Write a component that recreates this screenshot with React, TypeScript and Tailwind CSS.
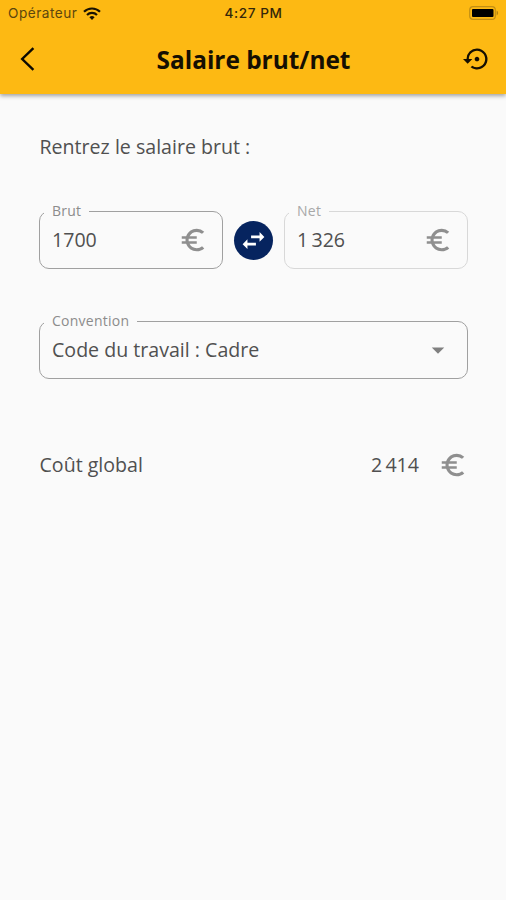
import type { ReactNode } from "react";
import { MdArrowDropDown, MdEuroSymbol, MdSettingsBackupRestore } from "react-icons/md";

const StatusBar = () => (
  <div className="grid h-[26px] grid-cols-3 items-center pl-[8px] pr-[7px] font-['Inter',sans-serif] text-[13.6px] leading-[26px]">
    <div className="flex items-center gap-[6px]">
      <span className="tracking-[0.5px] text-[#5c460e]">Opérateur</span>
      <svg className="h-[13px] w-[18px] shrink-0" viewBox="0 0 18 13" fill="none" stroke="#1a1303" strokeWidth="2.2">
        <path d="M1 4.8a11.4 11.4 0 0 1 16 0" />
        <path d="M4 8a7.1 7.1 0 0 1 10 0" />
        <path d="M9 13 6.4 10.2a3.7 3.7 0 0 1 5.2 0z" fill="#1a1303" stroke="none" />
      </svg>
    </div>
    <span className="text-center font-medium tracking-[0.6px] text-[#33270a]">4:27 PM</span>
    <svg className="h-[14px] w-[30px] justify-self-end" viewBox="0 0 30 14">
      <rect x="0.7" y="0.7" width="25.6" height="12.6" rx="3.4" fill="none" stroke="#c28f14" strokeWidth="1.2" />
      <rect x="3" y="3" width="21.5" height="8" rx="1" fill="#000" />
      <path d="M27.6 4.6c2 .8 2 4 0 4.8z" fill="#b4830f" />
    </svg>
  </div>
);

const Header = () => (
  <header className="relative h-[94px] bg-[#fdb913] shadow-[0_2px_4px_rgba(0,0,0,0.35)]">
    <StatusBar />
    <div className="flex h-[66px] items-center justify-between pl-[19px] pr-[15px]">
      <button aria-label="Retour" className="flex w-[25px]">
        <svg className="h-[24px] w-[16px]" viewBox="0 0 16 24" fill="none" stroke="#0d0a02" strokeWidth="2.4">
          <path d="M14.4 1.2 3.2 12l11.2 10.8" />
        </svg>
      </button>
      <h1 className="mt-[2px] text-[24.4px] font-bold leading-8 text-[#150f02]">Salaire brut/net</h1>
      <button aria-label="Réinitialiser">
        <MdSettingsBackupRestore className="h-[28px] w-[28px] text-[#150f02]" />
      </button>
    </div>
  </header>
);

type FieldProps = {
  label: string;
  value: string;
  icon: ReactNode;
  disabled?: boolean;
};

const Field = ({ label, value, icon, disabled }: FieldProps) => (
  <fieldset
    className={`h-[66px] min-w-0 flex-1 rounded-[10px] border pl-[4px] pr-[14px] ${
      disabled ? "border-[#d8d8d8]" : "border-[#a0a0a0]"
    }`}
  >
    <legend
      className={`h-[16px] pl-[8px] pr-[8px] text-[14px] leading-[15px] tracking-[0.25px] ${
        disabled ? "text-[#a8a8a8]" : "text-[#8c8c8c]"
      }`}
    >
      {label}
    </legend>
    <div className="flex h-[42px] items-center justify-between pl-[8px]">
      <span className="mb-px text-[19.6px] leading-6 text-[#505050]">{value}</span>
      {icon}
    </div>
  </fieldset>
);

const Euro = () => <MdEuroSymbol className="h-[30px] w-[30px] text-[#8f8f8f]" />;

const App = () => {
  return (
    <div className="h-[900px] w-[506px] overflow-hidden bg-[#fafafa] font-['Open_Sans',sans-serif]">
      <Header />
      <main className="pl-[39px] pr-[38px] pt-[39px]">
        <p className="pl-[0.5px] text-[19.6px] leading-7 text-[#505050]">Rentrez le salaire brut :</p>

        <div className="mt-[42px] flex items-center">
          <Field label="Brut" value="1700" icon={<Euro />} />
          <button
            aria-label="Inverser"
            className="mx-[11px] mt-[8px] flex h-[39px] w-[39px] items-center justify-center rounded-full bg-[#06245f]"
          >
            <svg className="h-[29px] w-[29px]" viewBox="0 0 24 24" fill="#fff">
              <path d="M6.99 11 3 15l3.99 4v-2.8H14v-2.4H6.99V11zM21 9l-3.99-4v2.8H10v2.4h7.01V13L21 9z" />
            </svg>
          </button>
          <Field label="Net" value={"1\u2009326"} icon={<Euro />} disabled />
        </div>

        <div className="mt-[44px] flex">
          <Field
            label="Convention"
            value="Code du travail : Cadre"
            icon={<MdArrowDropDown className="h-[30px] w-[30px] text-[#808080]" />}
          />
        </div>

        <div className="mt-[71px] flex h-[30px] items-center pl-[0.5px] text-[19.6px] text-[#505050]">
          <span className="flex-1">Coût global</span>
          <span className="mr-[19px]">{"2\u2009414"}</span>
          <Euro />
        </div>
      </main>
    </div>
  );
};

export default App;
